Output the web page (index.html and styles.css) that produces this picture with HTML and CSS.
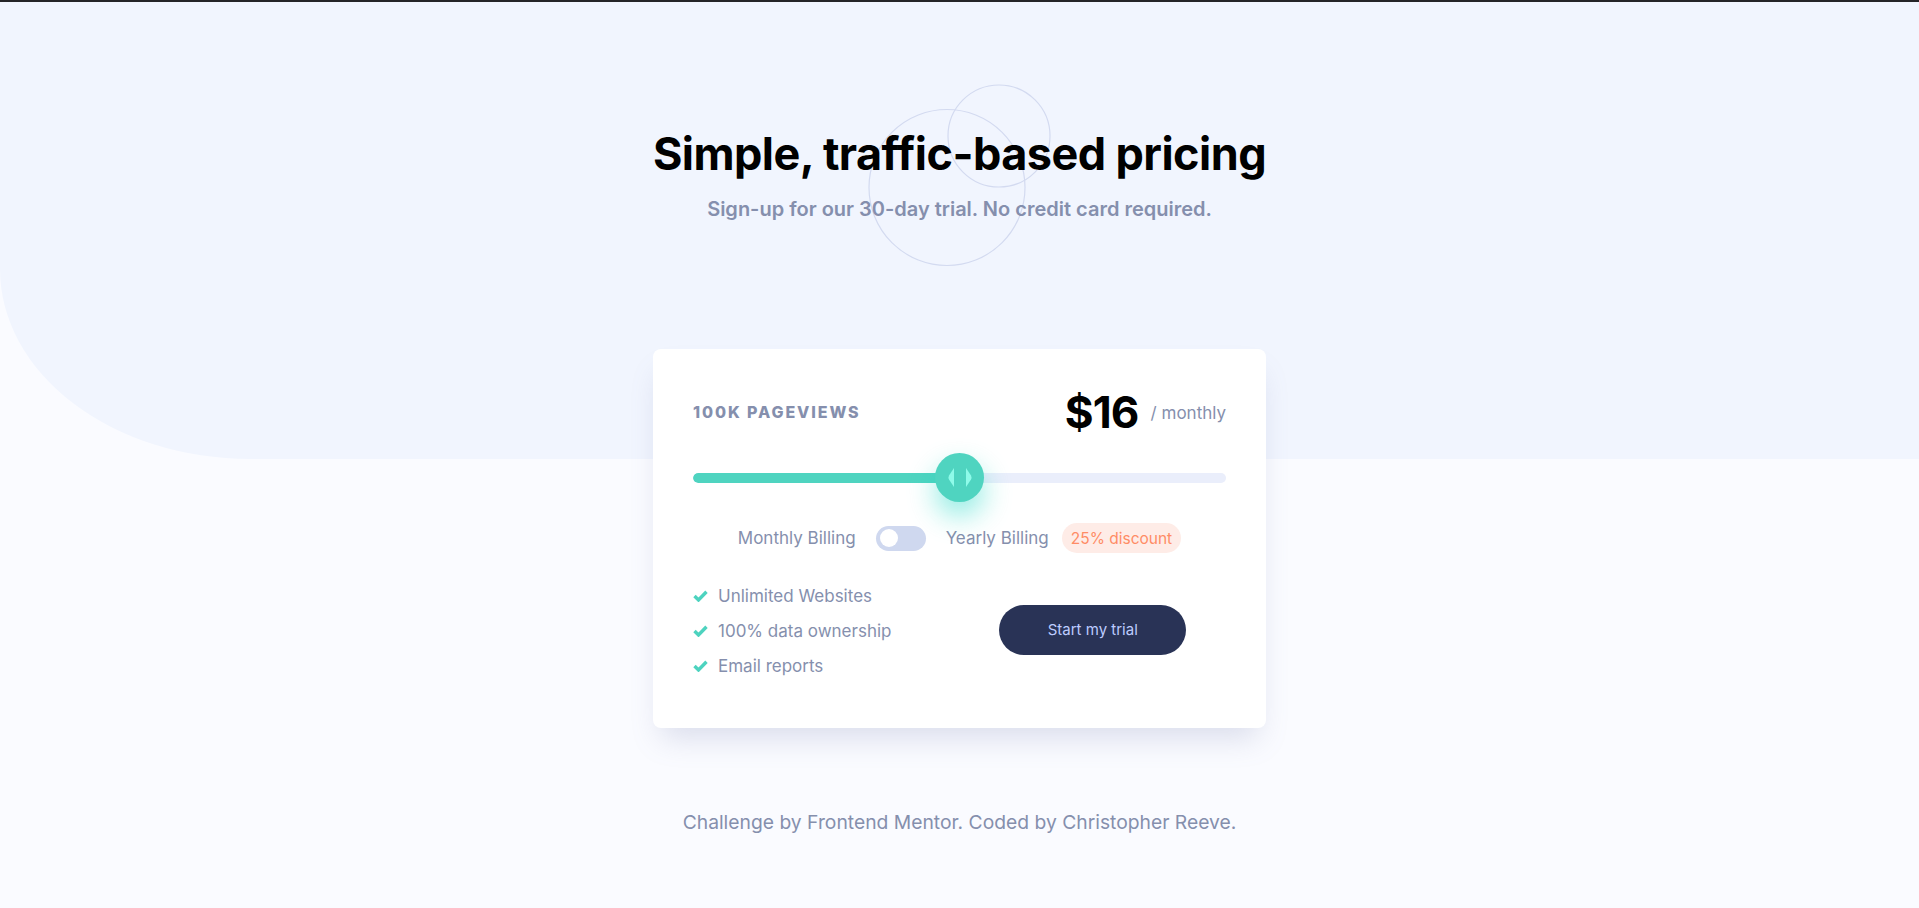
FILE: index.html
```html
<!DOCTYPE html>
<html lang="en">
<head>
<meta charset="utf-8">
<title>Interactive pricing component</title>
<link rel="stylesheet" href="styles.css">
</head>
<body>
<div class="page">
  <header class="hero">
    <svg class="circles" width="190" height="190" viewBox="0 0 190 190" aria-hidden="true">
      <circle cx="82" cy="105.5" r="78" fill="none" stroke="#d3daf0" stroke-width="1.2"/>
      <circle cx="134" cy="54" r="51" fill="none" stroke="#d3daf0" stroke-width="1.2"/>
    </svg>
    <h1 class="title">Simple, traffic-based pricing</h1>
    <p class="subtitle">Sign-up for our 30-day trial. No credit card required.</p>
  </header>

  <main class="card">
    <div class="card-top">
      <span class="views">100K Pageviews</span>
      <div class="price"><span class="amount">$16</span><span class="period">/ monthly</span></div>
    </div>

    <div class="slider">
      <div class="track"><div class="fill" style="width: 50%"></div></div>
      <div class="thumb" style="left: 50%">
        <svg width="24" height="19" viewBox="0 0 24 19" aria-hidden="true">
          <path d="M6 0 V19 L1 11.5 Q0 9.5 1 7.5 Z" fill="#8ffbe9"/>
          <path d="M18 0 V19 L23 11.5 Q24 9.5 23 7.5 Z" fill="#8ffbe9"/>
        </svg>
      </div>
    </div>

    <div class="billing">
      <span class="bill-label">Monthly Billing</span>
      <span class="toggle"><span class="knob"></span></span>
      <span class="bill-label">Yearly Billing</span>
      <span class="badge">25% discount</span>
    </div>

    <div class="card-bottom">
      <ul class="features">
        <li><svg class="check" width="15" height="12" viewBox="0 0 15 12" aria-hidden="true"><path d="M1.5 6 L5.5 10 L13.5 1.8" fill="none" stroke="#4dd3bf" stroke-width="3.4"/></svg>Unlimited Websites</li>
        <li><svg class="check" width="15" height="12" viewBox="0 0 15 12" aria-hidden="true"><path d="M1.5 6 L5.5 10 L13.5 1.8" fill="none" stroke="#4dd3bf" stroke-width="3.4"/></svg>100% data ownership</li>
        <li><svg class="check" width="15" height="12" viewBox="0 0 15 12" aria-hidden="true"><path d="M1.5 6 L5.5 10 L13.5 1.8" fill="none" stroke="#4dd3bf" stroke-width="3.4"/></svg>Email reports</li>
      </ul>
      <div class="cta-wrap">
        <button class="cta">Start my trial</button>
      </div>
    </div>
  </main>

  <footer class="footer">Challenge by Frontend Mentor. Coded by Christopher Reeve.</footer>
</div>
</body>
</html>
```

FILE: styles.css
```css
* { box-sizing: border-box; }

html, body {
  margin: 0;
  padding: 0;
}

body {
  background: #fafbff;
  border-top: 2px solid #252528;
  font-family: "Inter", "Noto Sans", sans-serif;
  color: #858fad;
  min-height: 908px;
}

.page {
  position: relative;
  display: flex;
  flex-direction: column;
  align-items: center;
}

.page::before {
  content: "";
  position: absolute;
  top: 0;
  left: 0;
  right: 0;
  height: 457px;
  background: #f1f5fe;
  border-bottom-left-radius: 250px 190px;
  z-index: 0;
}

.hero {
  position: relative;
  z-index: 1;
  width: 100%;
  display: flex;
  flex-direction: column;
  align-items: center;
  padding-top: 124px;
}

.circles {
  position: absolute;
  top: 80px;
  left: calc(50% - 94.5px);
  z-index: -1;
}

.title {
  margin: 0;
  font-size: 45px;
  line-height: 55px;
  font-weight: 700;
  color: #000;
  letter-spacing: -0.55px;
}

.subtitle {
  margin: 14px 0 0;
  font-size: 20px;
  line-height: 28px;
  font-weight: 600;
  color: #858fad;
}

.card {
  position: relative;
  z-index: 1;
  width: 613px;
  margin-top: 126px;
  background: #fff;
  border-radius: 8px;
  box-shadow: 0 18px 28px -8px rgba(110, 120, 170, 0.22);
  padding: 39px 40px 44px;
}

.card-top {
  display: flex;
  justify-content: space-between;
  align-items: center;
  height: 48px;
}

.views {
  font-size: 16px;
  font-weight: 800;
  letter-spacing: 1.9px;
  text-transform: uppercase;
  color: #858fad;
}

.price {
  display: flex;
  align-items: center;
  gap: 12px;
}

.amount {
  font-size: 44px;
  font-weight: 700;
  color: #000;
  letter-spacing: -0.8px;
}

.period {
  font-size: 17px;
  color: #858fad;
  padding-top: 2px;
}

.slider {
  position: relative;
  height: 50px;
  margin-top: 17px;
  display: flex;
  align-items: center;
}

.track {
  width: 100%;
  height: 10px;
  border-radius: 5px;
  background: #eaeefb;
  overflow: hidden;
}

.fill {
  height: 100%;
  background: #4fd4c0;
  border-radius: 5px;
}

.thumb {
  position: absolute;
  top: 0;
  width: 49px;
  height: 49px;
  margin-left: -24.5px;
  border-radius: 50%;
  background: #4fd4c0;
  box-shadow: 0 14px 28px rgba(16, 213, 194, 0.45);
  display: flex;
  align-items: center;
  justify-content: center;
}

.billing {
  display: flex;
  justify-content: center;
  align-items: center;
  margin-top: 20px;
  height: 30px;
  font-size: 17px;
  color: #858fad;
}

.toggle {
  width: 50px;
  height: 25px;
  border-radius: 13px;
  background: #cfd8ef;
  margin: 0 20px;
  display: flex;
  align-items: center;
  padding-left: 4px;
}

.knob {
  width: 18px;
  height: 18px;
  border-radius: 50%;
  background: #fff;
}

.badge {
  margin-left: 13px;
  height: 30px;
  padding: 0 9px;
  border-radius: 15px;
  background: #feece7;
  color: #ff8c66;
  font-size: 15.5px;
  display: flex;
  align-items: center;
}

.card-bottom {
  display: grid;
  grid-template-columns: 1fr 1fr;
  margin-top: 25px;
  align-items: center;
}

.features {
  list-style: none;
  margin: 0;
  padding: 0;
}

.features li {
  display: flex;
  align-items: center;
  height: 35.3px;
  font-size: 17px;
  color: #858fad;
}

.check {
  margin-right: 10px;
  flex: none;
}

.cta-wrap {
  display: flex;
  justify-content: center;
  padding-bottom: 2px;
}

.cta {
  width: 187px;
  height: 50px;
  border: 0;
  border-radius: 25px;
  background: #293356;
  color: #bdccff;
  font-family: inherit;
  font-size: 15px;
  cursor: pointer;
}

.footer {
  position: relative;
  z-index: 1;
  margin-top: 80px;
  font-size: 19.3px;
  line-height: 28px;
  color: #858fad;
}
```
